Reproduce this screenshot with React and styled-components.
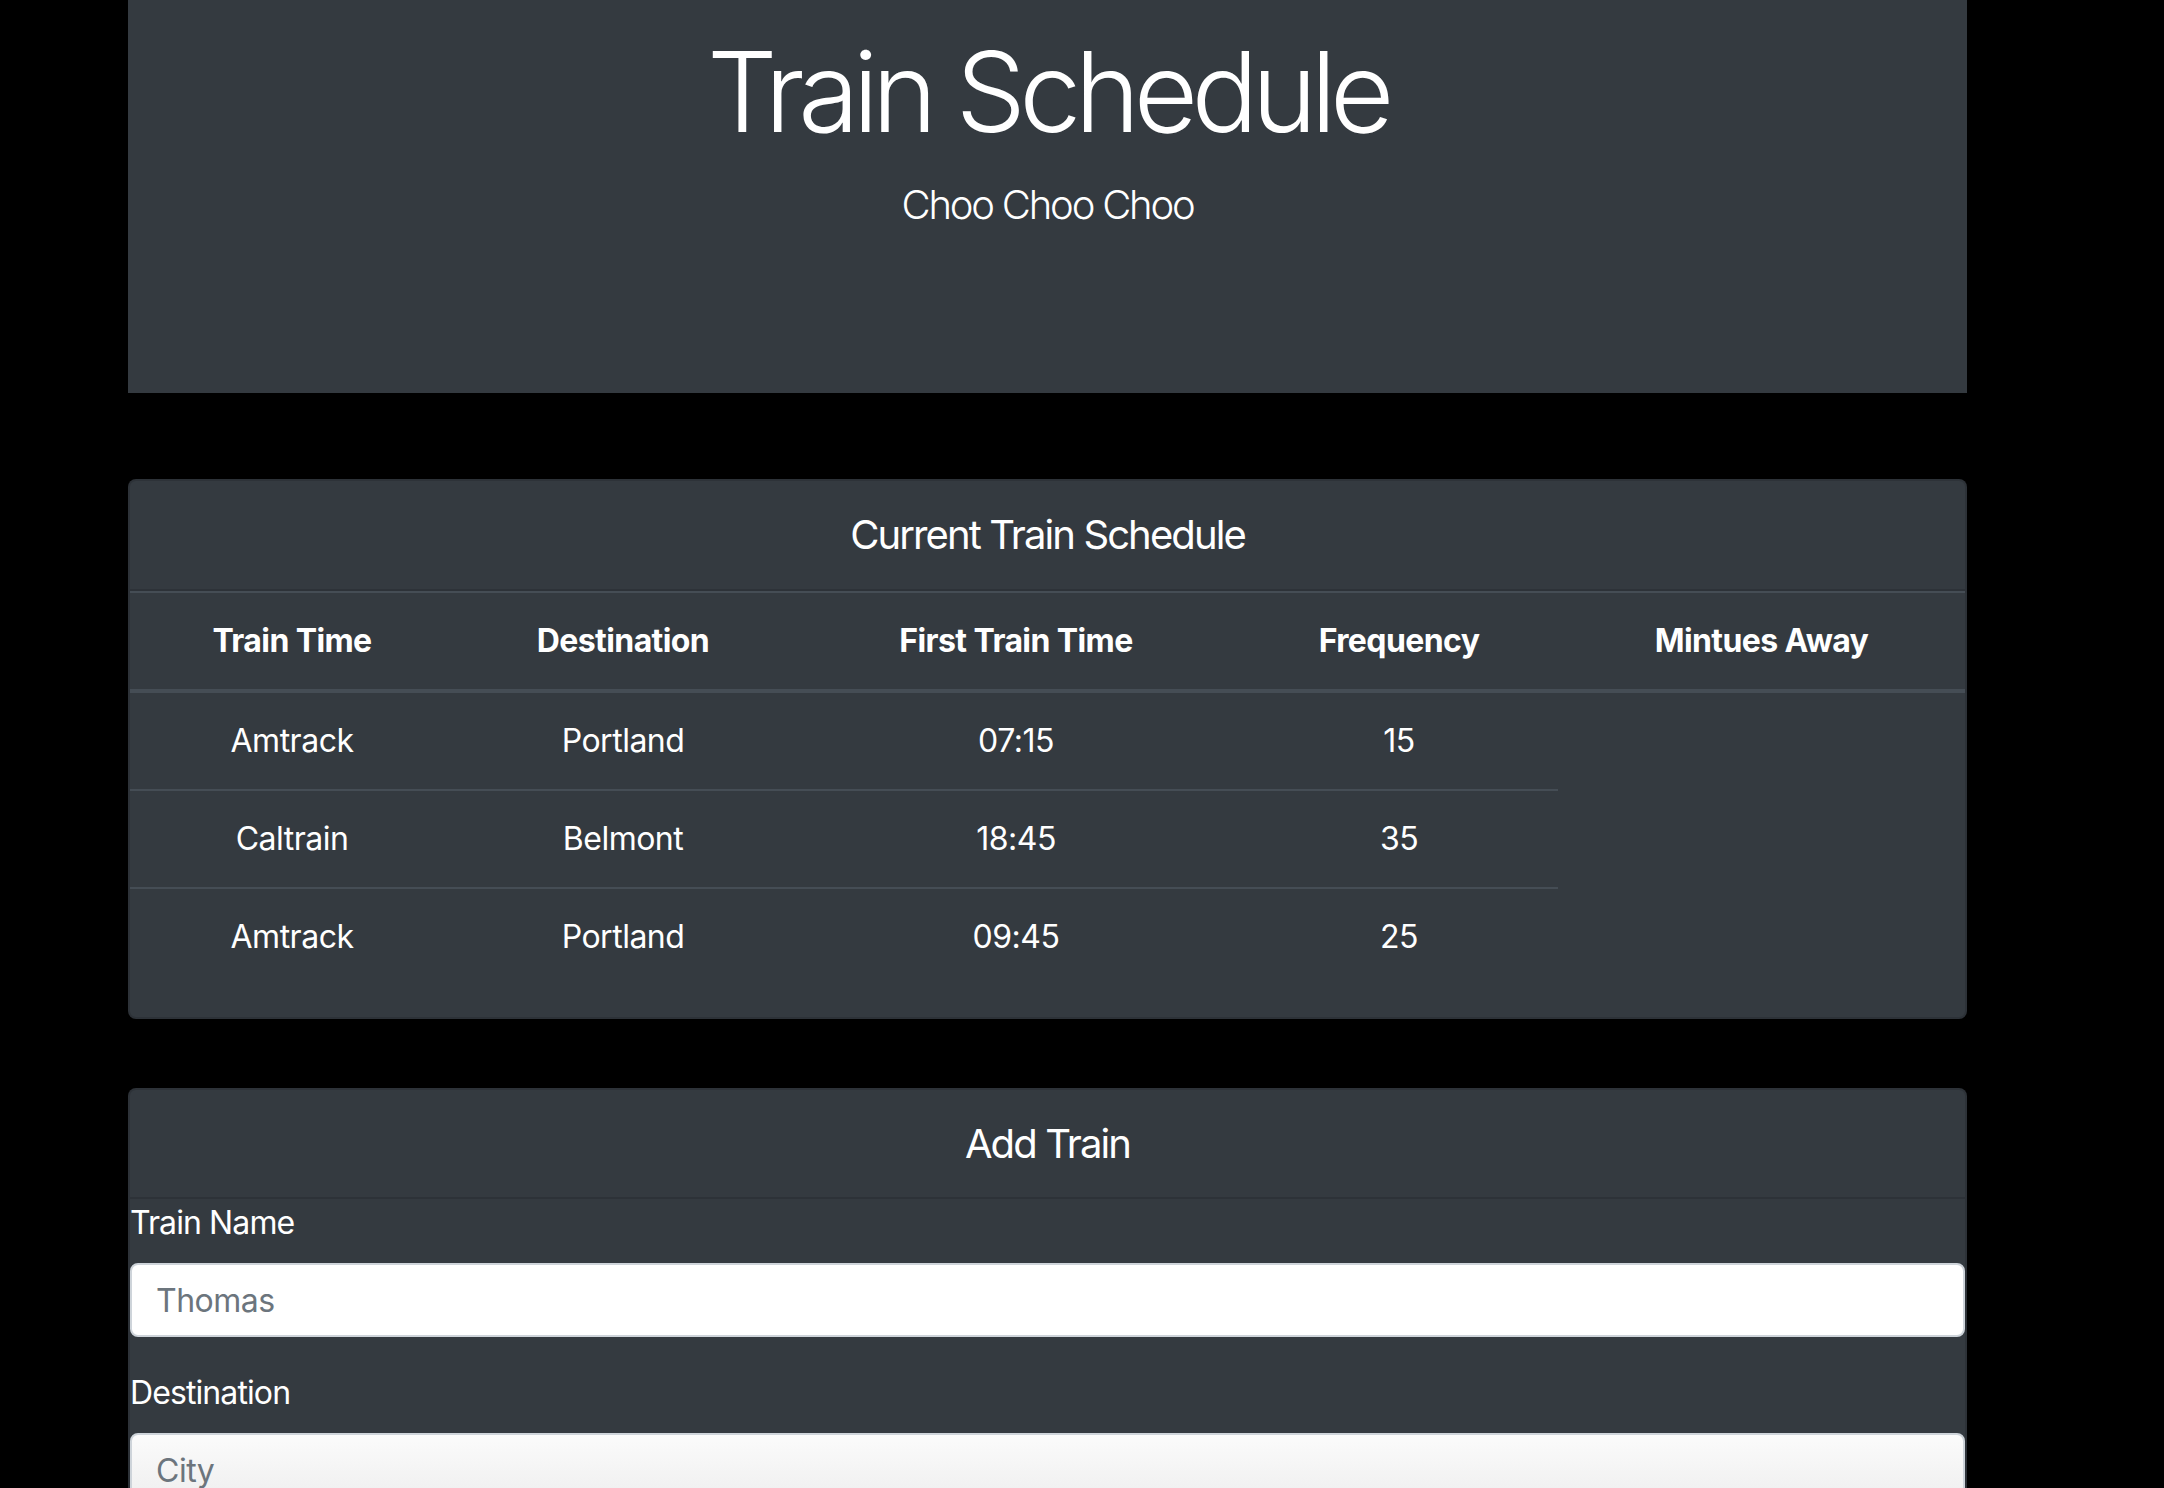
import React from "react";
import styled, { createGlobalStyle } from "styled-components";

const GlobalStyles = createGlobalStyle`
  body {
    margin: 0;
    background: #000;
    color: #fff;
    font-family: Inter, "Liberation Sans", sans-serif;
    font-size: 32px;
    line-height: 1.5;
    letter-spacing: -0.5px;
  }
`;

const Container = styled.div`
  width: 1839px;
  margin-left: 128px;
`;

const Jumbotron = styled.header`
  height: 393px;
  background: #343a40;
  text-align: center;
  padding-top: 25px;
  box-sizing: border-box;
  margin-bottom: 86px;
`;

const Title = styled.h1`
  margin: 0;
  font-size: 111px;
  font-weight: 300;
  line-height: 1.2;
  letter-spacing: -6.5px;
`;

const Lead = styled.p`
  margin: 17px 0 0;
  font-size: 40px;
  font-weight: 300;
  line-height: 1.5;
  letter-spacing: -2.2px;
`;

const Card = styled.section`
  background: #343a40;
  border: 2px solid rgba(0, 0, 0, 0.125);
  border-radius: 8px;
  margin-bottom: ${(p) => p.$gap || 0}px;
  overflow: hidden;
`;

const CardHeader = styled.div`
  padding: 24px 40px;
  border-bottom: 2px solid rgba(0, 0, 0, 0.125);
  text-align: center;
  font-size: 40px;
  line-height: 1.5;
  letter-spacing: -1.9px;
  height: ${(p) => p.$height}px;
  box-sizing: border-box;
  display: flex;
  align-items: center;
  justify-content: center;
`;

const Table = styled.table`
  width: 100%;
  table-layout: fixed;
  border-collapse: collapse;
  margin-bottom: 32px;
  color: #fff;
`;

const Th = styled.th`
  padding: 24px 0;
  text-align: center;
  font-weight: 700;
  letter-spacing: -0.6px;
  border-top: 2px solid #454d55;
  border-bottom: 4px solid #454d55;
`;

const Td = styled.td`
  padding: 24px 0;
  text-align: center;
  border-top: ${(p) => (p.$first ? "none" : "2px solid #454d55")};
`;

const FormGroup = styled.div`
  margin-bottom: 32px;
`;

const Label = styled.label`
  display: block;
  margin-bottom: 16px;
  line-height: 48px;
  letter-spacing: -0.9px;
`;

const Input = styled.input`
  display: block;
  width: 100%;
  box-sizing: border-box;
  height: 74px;
  padding: 12px 24px;
  font-family: inherit;
  font-size: 32px;
  letter-spacing: -0.5px;
  color: #495057;
  border: 2px solid #ced4da;
  border-radius: 8px;
  background: ${(p) =>
    p.$shaded ? "linear-gradient(#fbfbfb, #eeeeee)" : "#fff"};
  &::placeholder {
    color: #6c757d;
  }
`;

const trains = [
  { name: "Amtrack", dest: "Portland", first: "07:15", freq: "15" },
  { name: "Caltrain", dest: "Belmont", first: "18:45", freq: "35" },
  { name: "Amtrack", dest: "Portland", first: "09:45", freq: "25" },
];

export default function App() {
  return (
    <>
      <GlobalStyles />
      <Container>
        <Jumbotron>
          <Title>Train Schedule</Title>
          <Lead>Choo Choo Choo</Lead>
        </Jumbotron>

        <Card $gap={69}>
          <CardHeader $height={110}>Current Train Schedule</CardHeader>
          <Table>
            <colgroup>
              <col style={{ width: 324 }} />
              <col style={{ width: 338 }} />
              <col style={{ width: 448 }} />
              <col style={{ width: 318 }} />
              <col />
            </colgroup>
            <thead>
              <tr>
                <Th>Train Time</Th>
                <Th>Destination</Th>
                <Th>First Train Time</Th>
                <Th>Frequency</Th>
                <Th>Mintues Away</Th>
              </tr>
            </thead>
            <tbody>
              {trains.map((t, i) => (
                <tr key={i}>
                  <Td $first={i === 0}>{t.name}</Td>
                  <Td $first={i === 0}>{t.dest}</Td>
                  <Td $first={i === 0}>{t.first}</Td>
                  <Td $first={i === 0}>{t.freq}</Td>
                </tr>
              ))}
            </tbody>
          </Table>
        </Card>

        <Card>
          <CardHeader $height={109}>Add Train</CardHeader>
          <form>
            <FormGroup>
              <Label>Train Name</Label>
              <Input placeholder="Thomas" />
            </FormGroup>
            <FormGroup>
              <Label>Destination</Label>
              <Input placeholder="City" $shaded />
            </FormGroup>
            <FormGroup>
              <Label>First Train Time</Label>
              <Input placeholder="HH:mm" />
            </FormGroup>
          </form>
        </Card>
      </Container>
    </>
  );
}
